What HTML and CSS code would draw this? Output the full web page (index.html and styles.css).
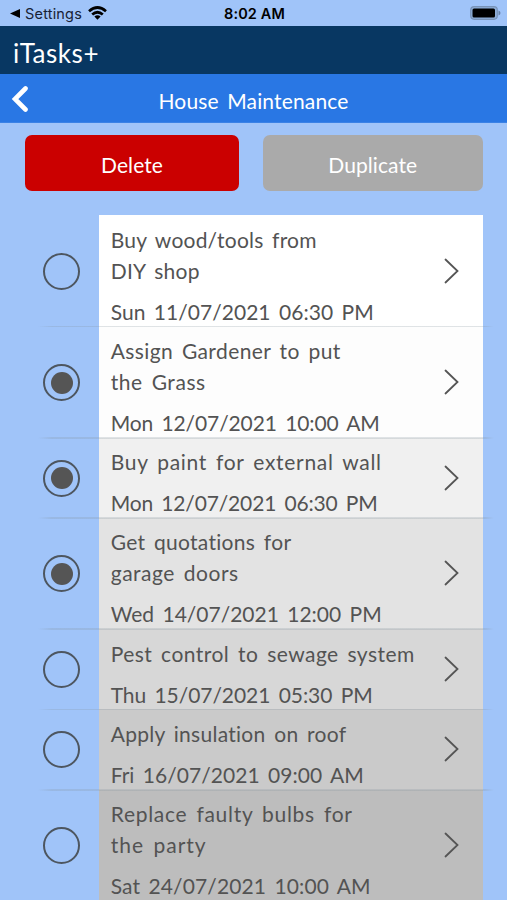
FILE: index.html
```html
<!DOCTYPE html>
<html lang="en">
<head>
<meta charset="utf-8">
<meta name="viewport" content="width=device-width, initial-scale=1">
<title>iTasks+</title>
<link rel="stylesheet" href="styles.css">
</head>
<body>
<div class="status">
  <div class="status-left">
    <svg width="10" height="9" viewBox="0 0 9 8"><path d="M0 4 9 0v8z"/></svg>
    <span class="settings" data-width="57">Settings</span>
    <svg class="wifi" width="19" height="14" viewBox="0 0 19 14"><g fill="none" stroke="#000" stroke-width="2.7"><path d="M1 5.2Q9.5-2.2 18 5.2"/><path d="M4.2 8.6Q9.5 3.9 14.8 8.6"/></g><path d="M6.4 10.6Q9.5 8 12.6 10.6L9.5 13.7z"/></svg>
  </div>
  <span class="clock" data-width="61">8:02 AM</span>
  <svg class="battery" width="31" height="14" viewBox="0 0 31 14"><rect x=".7" y=".7" width="26.6" height="12.6" rx="3.5" fill="#8eaed8" stroke="#7893b8" stroke-width="1.2"/><rect x="2.5" y="2.5" width="22.5" height="9" rx="1.5"/><path d="M28.5 4.5q2 .8 2 2.5t-2 2.5z" fill="#6984a8"/></svg>
</div>
<header class="brand"><span data-width="86">iTasks+</span></header>
<nav class="titlebar">
  <svg class="back" width="18" height="28" viewBox="0 0 18 28"><path d="M15.5 3.5 5 14l10.500 10.500" fill="none" stroke="#fff" stroke-width="4.6" stroke-linecap="round" stroke-linejoin="miter"/></svg>
  <h1><span data-width="190">House Maintenance</span></h1>
</nav>
<div class="actions">
  <button class="button delete"><span data-width="62">Delete</span></button>
  <button class="button duplicate"><span data-width="89">Duplicate</span></button>
</div>
<main class="tasks">
  <section class="task">
    <i class="radio"></i>
    <div class="card shade-1"><div class="copy"><p><span data-width="206">Buy wood/tools from</span></p><p><span data-width="89">DIY shop</span></p><time><span data-width="263">Sun 11/07/2021 06:30 PM</span></time></div><svg class="chevron" viewBox="0 0 15 26"><path d="m1.5 1.500 12 11.500-12 11.500"/></svg></div>
  </section>
  <section class="task">
    <i class="radio on"></i>
    <div class="card shade-2"><div class="copy"><p><span data-width="230">Assign Gardener to put</span></p><p><span data-width="95">the Grass</span></p><time><span data-width="269">Mon 12/07/2021 10:00 AM</span></time></div><svg class="chevron" viewBox="0 0 15 26"><path d="m1.5 1.500 12 11.500-12 11.500"/></svg></div>
  </section>
  <section class="task short">
    <i class="radio on"></i>
    <div class="card shade-3"><div class="copy"><p><span data-width="271">Buy paint for external wall</span></p><time><span data-width="267">Mon 12/07/2021 06:30 PM</span></time></div><svg class="chevron" viewBox="0 0 15 26"><path d="m1.5 1.500 12 11.500-12 11.500"/></svg></div>
  </section>
  <section class="task">
    <i class="radio on"></i>
    <div class="card shade-4"><div class="copy"><p><span data-width="181">Get quotations for</span></p><p><span data-width="128">garage doors</span></p><time><span data-width="271">Wed 14/07/2021 12:00 PM</span></time></div><svg class="chevron" viewBox="0 0 15 26"><path d="m1.5 1.500 12 11.500-12 11.500"/></svg></div>
  </section>
  <section class="task short">
    <i class="radio"></i>
    <div class="card shade-5"><div class="copy"><p><span data-width="304">Pest control to sewage system</span></p><time><span data-width="262">Thu 15/07/2021 05:30 PM</span></time></div><svg class="chevron" viewBox="0 0 15 26"><path d="m1.5 1.500 12 11.500-12 11.500"/></svg></div>
  </section>
  <section class="task short">
    <i class="radio"></i>
    <div class="card shade-6"><div class="copy"><p><span data-width="236">Apply insulation on roof</span></p><time><span data-width="253">Fri 16/07/2021 09:00 AM</span></time></div><svg class="chevron" viewBox="0 0 15 26"><path d="m1.5 1.500 12 11.500-12 11.500"/></svg></div>
  </section>
  <section class="task">
    <i class="radio"></i>
    <div class="card shade-7"><div class="copy"><p><span data-width="242">Replace faulty bulbs for</span></p><p><span data-width="96">the party</span></p><time><span data-width="260">Sat 24/07/2021 10:00 AM</span></time></div><svg class="chevron" viewBox="0 0 15 26"><path d="m1.5 1.500 12 11.500-12 11.500"/></svg></div>
  </section>
</main>
<script src="fit.js"></script>
</body>
</html>
```
FILE: styles.css
```css
* { box-sizing: border-box; }
html, body { height: 900px; overflow: hidden; }
body {
  margin: 0;
  background: #a0c4f9;
  color: #535353;
  font-family: Chalkboard, "Chalkboard SE", Lato, sans-serif;
}
span { white-space: nowrap; }
svg { display: block; flex: none; }
.status {
  display: grid;
  grid-template-columns: 1fr auto 1fr;
  align-items: center;
  height: 26px;
  padding: 1px 6px 0 10px;
  color: #000;
  font: 14.5px/24px Inter, sans-serif;
}
.status-left { display: flex; align-items: center; }
.settings { margin-left: 5px; color: #172235; }
.wifi { margin-left: 6px; margin-top: -1px; }
.clock { font-weight: 600; margin-left: -2px; }
.battery { justify-self: end; margin-top: -1px; }
.brand {
  height: 48px;
  padding-left: 13px;
  background: #083762;
  color: #fff;
  font-size: 26px;
  line-height: 54px;
}
.titlebar {
  display: grid;
  grid-template-columns: 30px 1fr 30px;
  align-items: center;
  height: 49px;
  background: #2977e4;
  border-bottom: 1px solid #3b82e6;
  color: #fff;
}
.back { margin: 1px 0 0 10px; }
h1 { margin: 5px 0 0; font-size: 21px; font-weight: 400; line-height: 30px; text-align: center; word-spacing: 3px; }
.actions { display: grid; grid-template-columns: 214px 219.5px; gap: 24px; padding: 12px 25px 24.4px; }
.button {
  height: 56px;
  padding: 4px 0 0;
  border: 0;
  border-radius: 7px;
  color: #fff;
  font-family: inherit;
  font-size: 21px;
  line-height: 30px;
}
.delete { background: #cb0000; }
.duplicate { background: #aaa; }
.tasks { padding-left: 38px; }
.task {
  position: relative;
  display: flex;
  align-items: center;
  width: 456px;
  height: 111.1px;
}
.task.short { height: 80.3px; }
.task::after {
  content: "";
  position: absolute;
  right: 0;
  bottom: -1px;
  left: 0;
  z-index: 1;
  height: 1.5px;
  background: linear-gradient(90deg, transparent, rgba(130, 145, 155, .24) 3%, rgba(130, 145, 155, .24) 98%, transparent);
}
.radio {
  display: grid;
  flex: none;
  place-items: center;
  width: 37px;
  height: 37px;
  margin: 1px 18.700px 0 5px;
  border: 2px solid #4d5660;
  border-radius: 50%;
}
.radio.on::before { content: ""; width: 22px; height: 22px; border-radius: 50%; background: #555; }
.card { display: flex; align-items: center; width: 384px; height: 100%; padding: 0 23.500px 0 12px; }
.copy { flex: 1; align-self: flex-start; padding-top: 8.600px; font-size: 21px; line-height: 31px; word-spacing: 3px; }
p { margin: 0; }
time { display: block; margin-top: 10px; }
.chevron { width: 15px; height: 26px; fill: none; stroke: #555; stroke-width: 1.8; stroke-linecap: round; stroke-linejoin: miter; }
.shade-1 { background: #fff; }
.shade-2 { background: #fdfdfd; }
.shade-3 { background: #f0f0f0; }
.shade-4 { background: #e3e3e3; }
.shade-5 { background: #d7d7d7; }
.shade-6 { background: #cacaca; }
.shade-7 { background: #bdbdbd; }
```
FILE: fit.js
```js
// Keeps each label at its designed width whichever font is available.
document.querySelectorAll("[data-width]").forEach(function (label) {
  var gap = Number(label.dataset.width) - label.getBoundingClientRect().width;
  label.style.letterSpacing = gap / label.textContent.length + "px";
});
```
